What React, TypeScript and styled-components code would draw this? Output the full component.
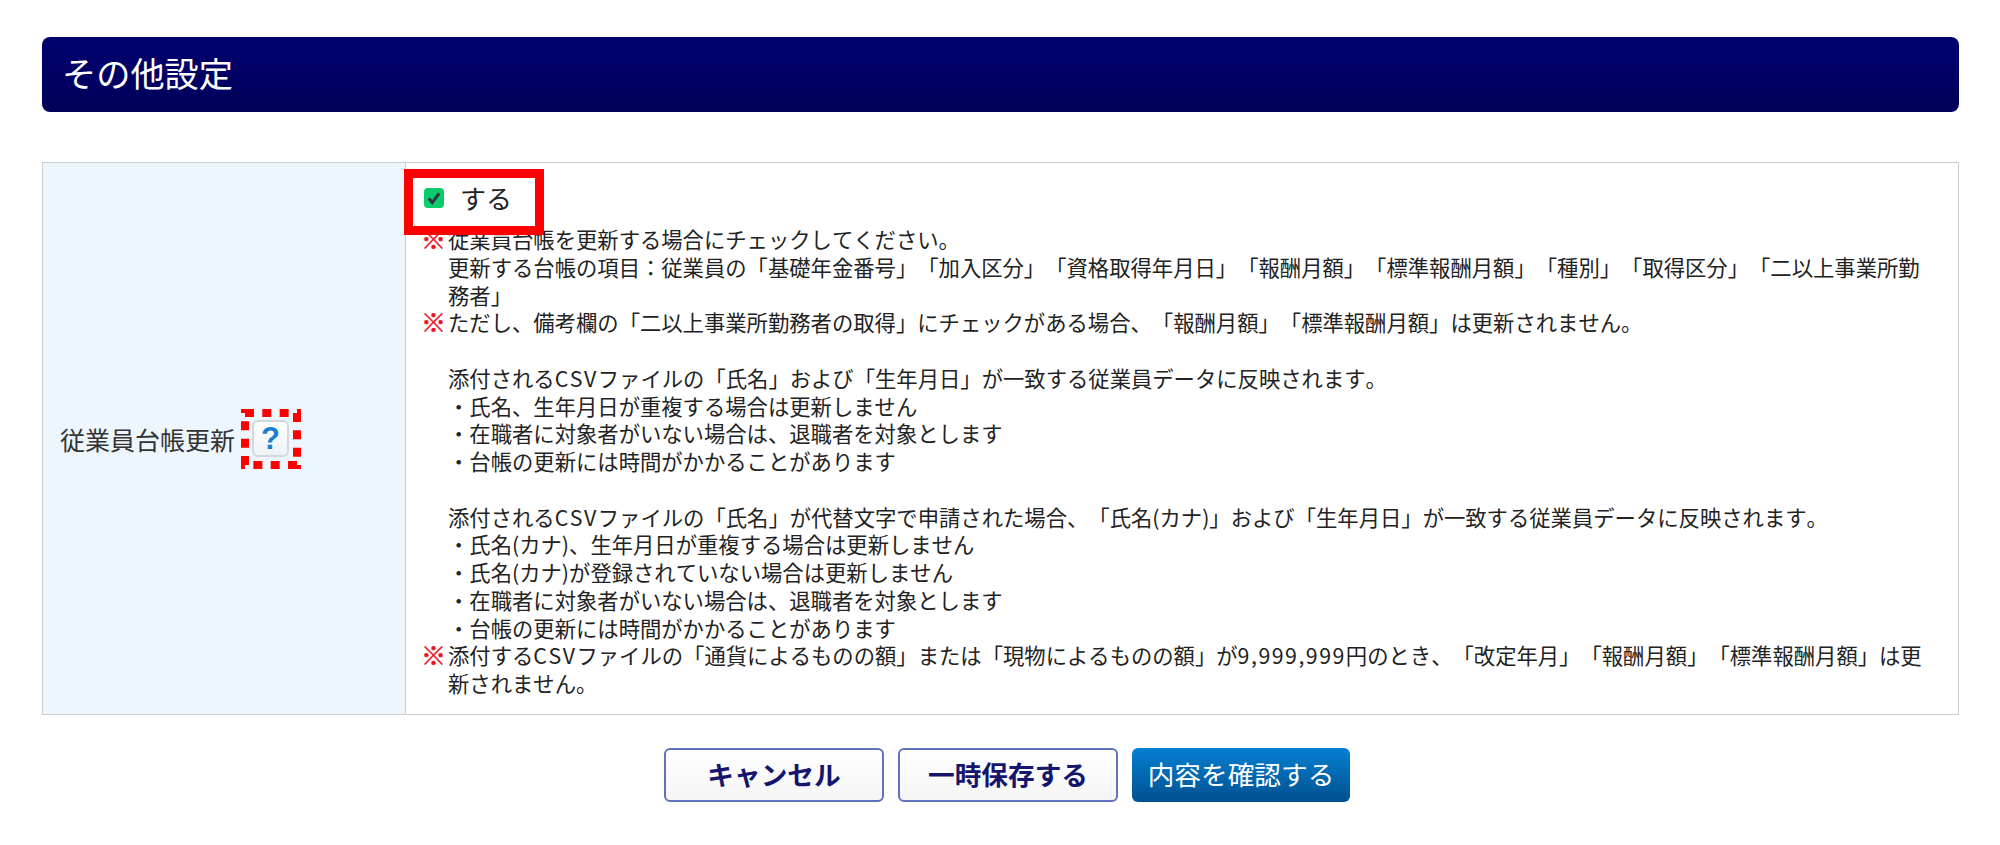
import React from 'react';
import styled, { createGlobalStyle } from 'styled-components';

const GlobalStyle = createGlobalStyle`
  html, body {
    margin: 0;
    padding: 0;
    background: #fff;
  }
  body {
    font-family: 'Noto Sans CJK JP', 'Liberation Sans', sans-serif;
    color: #222;
    text-spacing-trim: space-all;
    font-kerning: none;
  }
`;

const Page = styled.div`
  width: 1917px;
  margin-left: 42px;
  padding-top: 37px;
`;

const TitleBar = styled.h1`
  margin: 0 0 50px;
  height: 75px;
  display: flex;
  align-items: center;
  padding: 0 0 5px 20px;
  box-sizing: border-box;
  border-radius: 8px;
  background: linear-gradient(#000070, #000058);
  color: #fff;
  font-size: 34.2px;
  font-weight: 400;
`;

const SettingRow = styled.div`
  display: grid;
  grid-template-columns: 363px 1fr;
  height: 553px;
  box-sizing: border-box;
  border: 1px solid #ccc;
`;

const LabelCell = styled.div`
  display: flex;
  align-items: center;
  padding-left: 17px;
  background: #edf5fd;
  border-right: 1px solid #ccc;
  font-size: 25px;
  color: #333;
`;

const HelpWrap = styled.span`
  position: relative;
  margin-left: 17px;
  display: inline-flex;
`;

const HelpButton = styled.span`
  width: 37px;
  height: 37px;
  box-sizing: border-box;
  display: flex;
  align-items: center;
  justify-content: center;
  border: 2px solid #d4d8dc;
  border-radius: 6px;
  background: linear-gradient(#fff, #eef2f6);
  color: #1a7fd0;
  font-family: 'Liberation Sans', sans-serif;
  font-size: 31px;
  font-weight: 700;
`;

const HelpMarker = styled.svg`
  position: absolute;
  left: -11px;
  top: -11px;
`;

const ContentCell = styled.div`
  position: relative;
  padding: 11px 33px 0 16px;
  font-size: 21.33px;
  line-height: 27.75px;
`;

const CheckRow = styled.label`
  display: flex;
  align-items: center;
  height: 48px;
  margin-bottom: 3px;
  padding-left: 2px;
  font-size: 26px;
`;

const CheckMark = styled.span`
  width: 20px;
  height: 20px;
  margin-right: 16px;
  display: flex;
  align-items: center;
  justify-content: center;
  border-radius: 4px;
  background: #0acb6e;
`;

const CheckHighlight = styled.div`
  position: absolute;
  left: -2px;
  top: 6px;
  width: 140px;
  height: 66px;
  box-sizing: border-box;
  border: 9px solid #ff0000;
`;

const Note = styled.div`
  display: flex;
`;

const Mark = styled.span`
  flex: 0 0 27px;
  margin-left: -1px;
  color: #f01020;
  font-size: 25px;
  font-weight: 900;
  -webkit-text-stroke: 0.5px #f01020;
`;

const Body = styled.div`
  flex: 1;
`;

const Plain = styled.div`
  margin-top: 27.75px;
  padding-left: 26px;
`;

const Latin = styled.span`
  letter-spacing: 1.5px;
`;

const Actions = styled.div`
  display: flex;
  justify-content: center;
  gap: 14px;
  margin-top: 33px;
  padding-left: 13px;
`;

const ActionButton = styled.button<{ $primary?: boolean }>`
  height: 54px;
  width: ${(p) => (p.$primary ? '218px' : '220px')};
  box-sizing: border-box;
  padding: 0 0 4px;
  border-radius: 6px;
  font-family: inherit;
  font-size: 26.67px;
  font-weight: ${(p) => (p.$primary ? 400 : 700)};
  color: ${(p) => (p.$primary ? '#fff' : '#15156e')};
  border: ${(p) => (p.$primary ? 'none' : '2px solid #6172bd')};
  background: ${(p) =>
    p.$primary ? 'linear-gradient(#0680d2, #005090)' : 'linear-gradient(#fff, #f5f5f5)'};
`;

const App: React.FC = () => (
  <Page>
    <GlobalStyle />
    <TitleBar>その他設定</TitleBar>
    <SettingRow>
      <LabelCell>
        従業員台帳更新
        <HelpWrap>
          <HelpButton>?</HelpButton>
          <HelpMarker width="60" height="60" viewBox="0 0 60 60" fill="none">
            <rect x="4" y="4" width="52" height="52" stroke="#ff0000" strokeWidth="8" strokeDasharray="9 8.33" />
          </HelpMarker>
        </HelpWrap>
      </LabelCell>
      <ContentCell>
        <CheckRow>
          <CheckMark>
            <svg width="16" height="16" viewBox="0 0 14 14" fill="none">
              <path d="M2.5 7.5 L5.5 11 L11.5 3" stroke="#33333a" strokeWidth="2.6" />
            </svg>
          </CheckMark>
          する
        </CheckRow>
        <CheckHighlight />
        <Note>
          <Mark>※</Mark>
          <Body>
            従業員台帳を更新する場合にチェックしてください。
            <br />
            更新する台帳の項目：従業員の「基礎年金番号」「加入区分」「資格取得年月日」「報酬月額」「標準報酬月額」「種別」「取得区分」「二以上事業所勤務者」
          </Body>
        </Note>
        <Note>
          <Mark>※</Mark>
          <Body>ただし、備考欄の「二以上事業所勤務者の取得」にチェックがある場合、「報酬月額」「標準報酬月額」は更新されません。</Body>
        </Note>
        <Plain>
          添付される<Latin>CSV</Latin>ファイルの「氏名」および「生年月日」が一致する従業員データに反映されます。
          <br />・氏名、生年月日が重複する場合は更新しません
          <br />・在職者に対象者がいない場合は、退職者を対象とします
          <br />・台帳の更新には時間がかかることがあります
        </Plain>
        <Plain>
          添付される<Latin>CSV</Latin>ファイルの「氏名」が代替文字で申請された場合、「氏名(カナ)」および「生年月日」が一致する従業員データに反映されます。
          <br />・氏名(カナ)、生年月日が重複する場合は更新しません
          <br />・氏名(カナ)が登録されていない場合は更新しません
          <br />・在職者に対象者がいない場合は、退職者を対象とします
          <br />・台帳の更新には時間がかかることがあります
        </Plain>
        <Note>
          <Mark>※</Mark>
          <Body>添付する<Latin>CSV</Latin>ファイルの「通貨によるものの額」または「現物によるものの額」が<Latin>9,999,999</Latin>円のとき、「改定年月」「報酬月額」「標準報酬月額」は更新されません。</Body>
        </Note>
      </ContentCell>
    </SettingRow>
    <Actions>
      <ActionButton>キャンセル</ActionButton>
      <ActionButton>一時保存する</ActionButton>
      <ActionButton $primary>内容を確認する</ActionButton>
    </Actions>
  </Page>
);

export default App;
